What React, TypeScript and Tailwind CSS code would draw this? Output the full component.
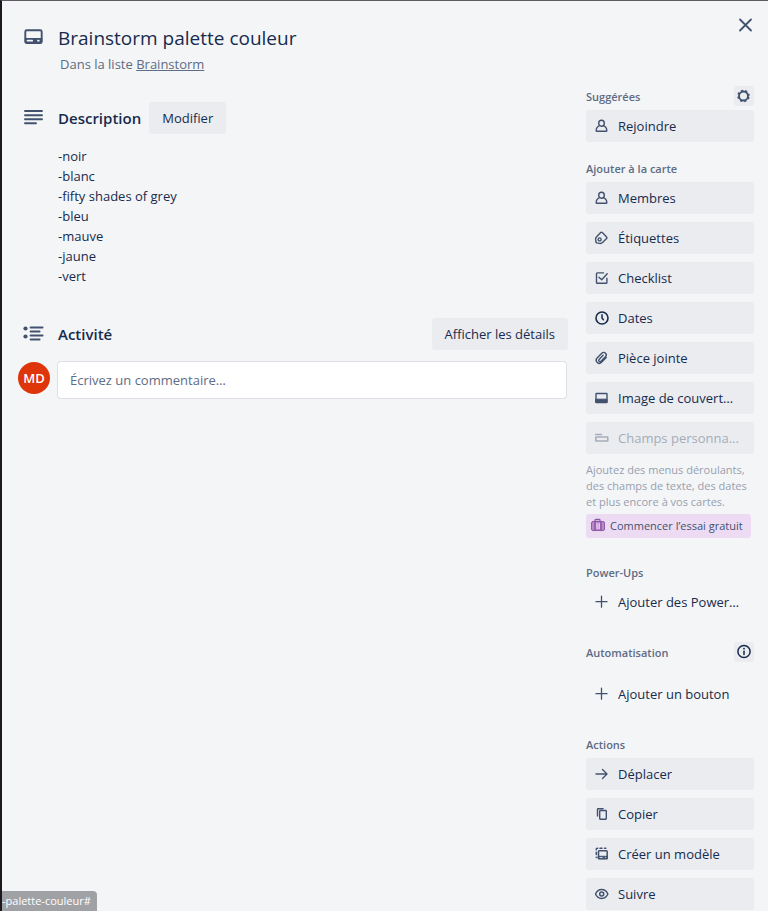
import type { ReactNode } from "react";

function Icon({ size = 16, className = "", children }: { size?: number; className?: string; children: ReactNode }) {
  return (
    <svg
      width={size}
      height={size}
      viewBox={`0 0 ${size} ${size}`}
      fill="none"
      stroke="currentColor"
      strokeLinecap="round"
      strokeLinejoin="round"
      aria-hidden="true"
      className={`shrink-0 ${className}`}
    >
      {children}
    </svg>
  );
}

const cardIcon = (
  <Icon size={24}>
    <rect x="3.300" y="4.300" width="16.400" height="12.700" rx="1.500" strokeWidth="1.900" />
    <path d="M3.300 12.700h16.400v3.300a1 1 0 0 1-1 1H4.300a1 1 0 0 1-1-1z" fill="currentColor" strokeWidth="1.200" />
    <path d="M5.500 14.700h4.700M16 14.700h.8" stroke="#f4f5f7" strokeWidth="1.700" />
  </Icon>
);

const descriptionIcon = (
  <Icon size={24}>
    <path d="M3 5h17M3 9.300h17M3 13.300h17M3 17.300h11" strokeWidth="1.900" />
  </Icon>
);

const activityIcon = (
  <Icon size={24}>
    <g fill="currentColor" stroke="none">
      <circle cx="3.500" cy="6.500" r="2.100" />
      <circle cx="3.500" cy="14.500" r="2.100" />
    </g>
    <path d="M8.600 5.500h12M8.600 9.500h9M8.600 13.500h12M8.600 17.500h9" strokeWidth="1.900" />
  </Icon>
);

const memberIcon = (
  <Icon>
    <ellipse cx="7.500" cy="5.200" rx="2.800" ry="3" strokeWidth="1.400" />
    <path d="M5.500 7.700C3.400 8.500 2.200 10.300 2.200 12.700c0 .4.2.6.6.6h9.400c.4 0 .6-.2.6-.6 0-2.400-1.200-4.200-3.300-5" strokeWidth="1.400" />
  </Icon>
);

const labelIcon = (
  <Icon>
    <path
      d="M6.700 2.600a1.100 1.100 0 0 1 1.600 0L12.600 6.900a1.100 1.100 0 0 1 0 1.600L8.800 12.300a3.800 3.800 0 0 1-3.300 1.100l-2.600-.5a1.200 1.200 0 0 1-.9-.9L1.600 9.700a3.200 3.200 0 0 1 1-2.900z"
      strokeWidth="1.400"
    />
    <circle cx="5.600" cy="9.400" r="1.500" strokeWidth="1.400" />
  </Icon>
);

const checklistIcon = (
  <Icon>
    <path d="M9.500 2.900H3.300a.8.800 0 0 0-.8.800v8.800a.8.800 0 0 0 .8.800h8.800a.8.800 0 0 0 .8-.8V8.300" strokeWidth="1.400" />
    <path d="M5 7.200 7.700 9.700l5.500-6" strokeWidth="1.400" />
  </Icon>
);

const clockIcon = (
  <Icon className="text-[#172b4d]">
    <circle cx="8" cy="8" r="6" strokeWidth="1.600" />
    <path d="M8 4.700V8l1.400 1.700" strokeWidth="1.500" />
  </Icon>
);

const attachmentIcon = (
  <Icon>
    <path
      d="m12.200 7.500-4.700 4.800a3 3 0 0 1-4.400-4.200l4.700-4.900a2.500 2.500 0 0 1 3.700 0 2.500 2.500 0 0 1 0 3.500l-4.500 4.600a1.300 1.300 0 0 1-1.900-1.900l4-4.100"
      strokeWidth="1.400"
    />
  </Icon>
);

const coverIcon = (
  <Icon>
    <rect x="2" y="3.500" width="11" height="9" rx="0.500" strokeWidth="1.400" />
    <path d="M2 9.200h11v3.300H2z" fill="currentColor" strokeWidth="1" />
  </Icon>
);

const fieldsIcon = (
  <Icon>
    <path d="M1.500 4.600h6" strokeWidth="1.500" />
    <rect x="1.800" y="7" width="12" height="4" rx="0.600" strokeWidth="1.600" />
  </Icon>
);

const plusIcon = (
  <Icon>
    <path d="M7.500 2.200v11M2 7.700h11" strokeWidth="1.300" />
  </Icon>
);

const arrowIcon = (
  <Icon>
    <path d="M2 8h11M8.500 3.500 13 8l-4.500 4.500" strokeWidth="1.400" />
  </Icon>
);

const copyIcon = (
  <Icon>
    <path d="M3.500 10V3.300a.6.600 0 0 1 .6-.6h5" strokeWidth="1.400" />
    <rect x="5.700" y="4.500" width="6.600" height="8.700" rx="0.600" strokeWidth="1.400" />
  </Icon>
);

const templateIcon = (
  <Icon>
    <path d="M2.300 11.200v.3M2.300 6.200v2.200M2.300 3.700v-.4a1 1 0 0 1 1-1h.4M6 2.300h2M10.500 2.300h1.300" strokeWidth="1.500" />
    <rect x="4.500" y="4.700" width="8.700" height="8" rx="0.800" strokeWidth="1.500" />
    <path d="M4.500 10.300h8.700v2.400H4.500z" fill="currentColor" strokeWidth="1" />
    <path d="M6 11.600h2.300M11.300 11.600h.2" stroke="#eaecf0" strokeWidth="0.900" />
  </Icon>
);

const eyeIcon = (
  <Icon>
    <path
      d="M1.500 8C2.800 5.100 4.900 3.500 7.700 3.500S12.600 5.100 13.900 8c-1.300 2.900-3.400 4.500-6.200 4.500S2.800 10.900 1.500 8z"
      strokeWidth="1.400"
    />
    <circle cx="7.700" cy="8" r="2" strokeWidth="1.500" />
  </Icon>
);

const gearIcon = (
  <Icon>
    <circle cx="7.500" cy="8" r="4.500" strokeWidth="1.900" />
    <circle cx="7.500" cy="8" r="5.500" strokeWidth="1.500" strokeLinecap="butt" strokeDasharray="2.200 2.120" strokeDashoffset="-1.060" />
  </Icon>
);

const infoIcon = (
  <Icon className="text-[#172b4d]">
    <circle cx="8" cy="7.500" r="6.100" strokeWidth="1.500" />
    <path d="M8 7.300v3.200" strokeWidth="1.500" />
    <circle cx="8" cy="4.700" r="0.900" fill="currentColor" stroke="none" />
  </Icon>
);

const closeIcon = (
  <Icon size={24}>
    <path d="m7 6.500 11 11M18 6.500l-11 11" strokeWidth="1.800" />
  </Icon>
);

const caseIcon = (
  <Icon className="text-[#8f5aa5]">
    <path d="M5 3.500V2.300a.8.800 0 0 1 .8-.8h3.400a.8.800 0 0 1 .8.800v1.200" strokeWidth="1.300" />
    <rect x="1.500" y="3.500" width="13" height="9" rx="1.500" fill="#b78ac9" strokeWidth="1" />
    <path d="M5 3.500v9M11 3.500v9" strokeWidth="1.600" />
    <path d="M7 5.500v5M9.200 5.500v5" stroke="#eddbf4" strokeWidth="1.200" />
  </Icon>
);

function SideButton({
  icon,
  label,
  plain = false,
  disabled = false,
}: {
  icon: ReactNode;
  label: string;
  plain?: boolean;
  disabled?: boolean;
}) {
  return (
    <button
      type="button"
      disabled={disabled}
      className={`flex h-8 w-full items-center gap-2 rounded-[3px] px-2 text-left ${
        plain ? "" : "bg-[#eaecf0]"
      } ${disabled ? "text-[#a5adba]" : "text-[#172b4d]"}`}
    >
      <span className={disabled ? "text-[#a5adba]" : "text-[#42526e]"}>{icon}</span>
      <span className="truncate">{label}</span>
    </button>
  );
}

function SideSection({
  title,
  action,
  className = "",
  children,
}: {
  title: string;
  action?: ReactNode;
  className?: string;
  children: ReactNode;
}) {
  return (
    <section className={`flex flex-col gap-1 ${className}`}>
      <div className="flex h-5 items-center justify-between">
        <h3 className="pt-0.5 text-[11px] font-semibold text-[#5e6c84]">{title}</h3>
        {action}
      </div>
      {children}
    </section>
  );
}

function SmallButton({ label, children }: { label: string; children: ReactNode }) {
  return (
    <button
      type="button"
      aria-label={label}
      className="flex size-5 items-center justify-center rounded-[3px] bg-[#eaecf0] text-[#42526e]"
    >
      {children}
    </button>
  );
}

const lines = ["-noir", "-blanc", "-fifty shades of grey", "-bleu", "-mauve", "-jaune", "-vert"];

export default function App() {
  return (
    <div className="relative min-h-screen overflow-hidden border-t border-l-2 border-t-[#5f5c63] border-l-[#1d1820] bg-[#f4f5f7] font-['Open_Sans','Noto_Sans',sans-serif] text-[13px] leading-5 text-[#172b4d]">
      <button type="button" aria-label="Fermer" className="absolute top-3 right-[11px] text-[#42526e]">
        {closeIcon}
      </button>

      <div className="flex items-start gap-[18px] pr-3.5 pl-4">
        <main className="min-w-0 flex-1 pt-[21px]">
          <header>
            <div className="flex h-8 items-center">
              <span className="w-10 shrink-0 pl-1 text-[#42526e]">{cardIcon}</span>
              <h1 className="text-[19px] font-medium">Brainstorm palette couleur</h1>
            </div>
            <p className="pl-[42px] text-[#5e6c84]">
              Dans la liste{" "}
              <a href="#brainstorm" className="underline">
                Brainstorm
              </a>
            </p>
          </header>

          <section className="mt-7">
            <div className="flex h-8 items-center">
              <span className="w-10 shrink-0 pl-1 text-[#42526e]">{descriptionIcon}</span>
              <h2 className="text-[15px] font-semibold">Description</h2>
              <button type="button" className="ml-2 h-8 rounded-[3px] bg-[#eaecf0] px-[13px]">
                Modifier
              </button>
            </div>
            <div className="mt-3 pl-10">
              {lines.map((line) => (
                <p key={line}>{line}</p>
              ))}
            </div>
          </section>

          <section className="mt-8">
            <div className="flex h-8 items-center">
              <span className="w-10 shrink-0 pl-1 text-[#42526e]">{activityIcon}</span>
              <h2 className="text-[15px] font-semibold">Activité</h2>
              <button type="button" className="ml-auto h-8 rounded-[3px] bg-[#eaecf0] px-[13px]">
                Afficher les détails
              </button>
            </div>
            <div className="mt-3 mr-0.5 flex items-start gap-2">
              <span className="flex size-8 shrink-0 items-center justify-center rounded-full bg-[#de350b] font-semibold text-white">
                MD
              </span>
              <input
                type="text"
                aria-label="Commentaire"
                placeholder="Écrivez un commentaire…"
                className="h-9 min-w-0 flex-1 rounded-[3px] bg-white px-3 shadow-[0_0_0_1px_#dfe1e6,0_1px_0_0_#cdd1da] placeholder:text-[#5e6c84]"
              />
            </div>
          </section>
        </main>

        <aside className="w-[168px] shrink-0 pt-[85px]">
          <SideSection title="Suggérées" action={<SmallButton label="Paramètres">{gearIcon}</SmallButton>}>
            <SideButton icon={memberIcon} label="Rejoindre" />
          </SideSection>

          <SideSection title="Ajouter à la carte" className="mt-4">
            <div className="flex flex-col gap-2">
              <SideButton icon={memberIcon} label="Membres" />
              <SideButton icon={labelIcon} label="Étiquettes" />
              <SideButton icon={checklistIcon} label="Checklist" />
              <SideButton icon={clockIcon} label="Dates" />
              <SideButton icon={attachmentIcon} label="Pièce jointe" />
              <SideButton icon={coverIcon} label="Image de couvert…" />
              <SideButton icon={fieldsIcon} label="Champs personna…" disabled />
              <p className="text-[11px] leading-4 text-[#97a0af]">
                Ajoutez des menus déroulants, des champs de texte, des dates et plus encore à vos cartes.
              </p>
            </div>
            <button
              type="button"
              className="flex h-6 items-center gap-1 self-start rounded-[3px] bg-[#eddbf4] pr-2 pl-1 text-[11px] whitespace-nowrap text-[#42526e]"
            >
              {caseIcon}
              Commencer l’essai gratuit
            </button>
          </SideSection>

          <SideSection title="Power-Ups" className="mt-6">
            <SideButton icon={plusIcon} label="Ajouter des Power…" plain />
          </SideSection>

          <SideSection
            title="Automatisation"
            className="mt-6"
            action={<SmallButton label="Informations">{infoIcon}</SmallButton>}
          >
            <div className="pt-3">
              <SideButton icon={plusIcon} label="Ajouter un bouton" plain />
            </div>
          </SideSection>

          <SideSection title="Actions" className="mt-6">
            <div className="flex flex-col gap-2">
              <SideButton icon={arrowIcon} label="Déplacer" />
              <SideButton icon={copyIcon} label="Copier" />
              <SideButton icon={templateIcon} label="Créer un modèle" />
              <SideButton icon={eyeIcon} label="Suivre" />
            </div>
          </SideSection>
        </aside>
      </div>

      <div className="absolute bottom-0 left-0 h-5 rounded-tr-[4px] bg-[#a0a1a5] pr-1.5 text-[11px] leading-5 text-white">
        -palette-couleur#
      </div>
    </div>
  );
}
